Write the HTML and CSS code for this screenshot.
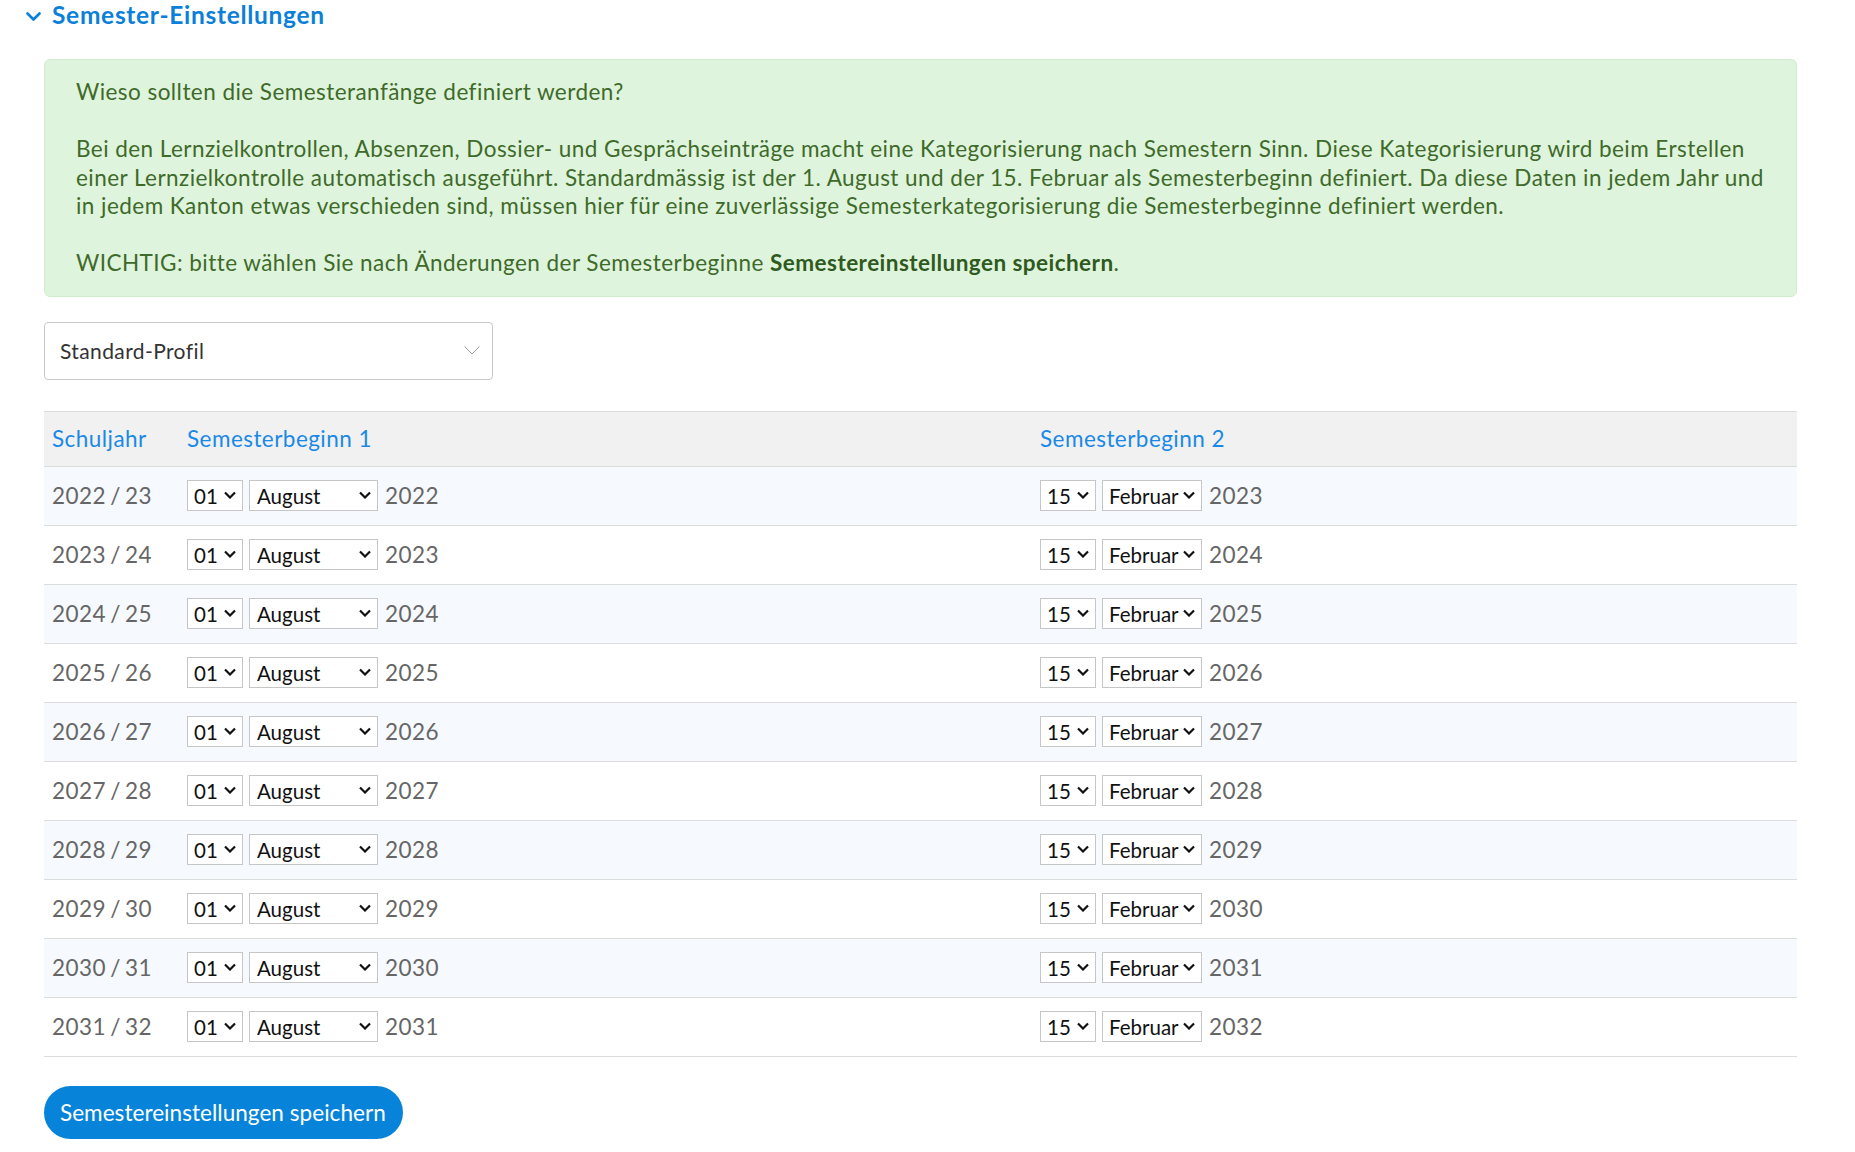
FILE: index.html
```html
<!DOCTYPE html>
<html lang="de">
<head>
<meta charset="utf-8">
<title>Semester-Einstellungen</title>
<link rel="stylesheet" href="styles.css">
</head>
<body>
<div class="page">
  <h2 class="section-title">
    <svg class="title-chev" width="15" height="9" viewBox="0 0 15 9"><path d="M1.5 1.5 L7.5 7.5 L13.5 1.5" fill="none" stroke="#0b80d8" stroke-width="2.6" stroke-linecap="round" stroke-linejoin="round"/></svg>
    <span>Semester-Einstellungen</span>
  </h2>

  <div class="info">
    <p>Wieso sollten die Semesteranfänge definiert werden?</p>
    <p>Bei den Lernzielkontrollen, Absenzen, Dossier- und Gesprächseinträge macht eine Kategorisierung nach Semestern Sinn. Diese Kategorisierung wird beim Erstellen<br>einer Lernzielkontrolle automatisch ausgeführt. Standardmässig ist der 1. August und der 15. Februar als Semesterbeginn definiert. Da diese Daten in jedem Jahr und<br>in jedem Kanton etwas verschieden sind, müssen hier für eine zuverlässige Semesterkategorisierung die Semesterbeginne definiert werden.</p>
    <p>WICHTIG: bitte wählen Sie nach Änderungen der Semesterbeginne <strong>Semestereinstellungen speichern</strong>.</p>
  </div>

  <div class="profile">
    <select class="profile-select">
      <option>Standard-Profil</option>
    </select>
    <svg class="profile-chev" width="16" height="9" viewBox="0 0 16 9"><path d="M0.5 0.5 L8 8 L15.5 0.5" fill="none" stroke="#a0a0a0" stroke-width="1"/></svg>
  </div>

  <table class="sem-table">
    <colgroup><col class="c-year"><col class="c-s1"><col class="c-s2"></colgroup>
    <thead>
      <tr><th>Schuljahr</th><th>Semesterbeginn 1</th><th>Semesterbeginn 2</th></tr>
    </thead>
    <tbody id="rows"></tbody>
  </table>

  <button class="save-btn" type="button">Semestereinstellungen speichern</button>
</div>
<script src="app.js"></script>
</body>
</html>
```
FILE: styles.css
```css
* { box-sizing: border-box; }
html, body { margin: 0; padding: 0; background: #fff; }
body {
  font-family: "Lato", "Roboto", "Open Sans", sans-serif;
  font-size: 22.5px;
  letter-spacing: 0.45px;
  color: #333;
}
.page {
  width: 1753px;
  margin-left: 44px;
  padding-top: 0;
}
.section-title {
  display: flex;
  align-items: center;
  gap: 11px;
  margin: -1px 0 0 -18px;
  height: 32px;
  font-size: 24.5px;
  line-height: 32px;
  letter-spacing: 0.7px;
  font-weight: 700;
  color: #0b80d8;
}
.title-chev { display: block; margin-top: 2px; }

.info {
  margin-top: 28px;
  background: #dff4dc;
  border: 1px solid #d3ecd0;
  border-radius: 6px;
  padding: 18px 31px 18px 31px;
  color: #3e6a2a;
  line-height: 28.5px;
}
.info p { margin: 0; }
.info p + p { margin-top: 28.5px; }
.info strong { font-weight: 700; color: #2f5a1e; }

.profile {
  position: relative;
  width: 449px;
  margin-top: 25px;
}
.profile-select {
  display: block;
  width: 449px;
  height: 58px;
  appearance: none;
  -webkit-appearance: none;
  background: #fff;
  border: 1px solid #c9c9c9;
  border-radius: 4px;
  padding: 0 40px 0 15px;
  font-family: inherit;
  font-size: 21px;
  letter-spacing: 0.4px;
  color: #333;
}
.profile-chev {
  position: absolute;
  right: 13px;
  top: 24px;
  pointer-events: none;
}

.sem-table {
  margin-top: 31px;
  width: 1753px;
  border-collapse: collapse;
  table-layout: fixed;
}
.c-year { width: 135px; }
.c-s1 { width: 853px; }
.sem-table thead tr {
  background: #f1f1f1;
  border-top: 1px solid #dcdcdc;
  height: 55px;
}
.sem-table th {
  text-align: left;
  font-weight: 400;
  color: #1a89e6;
  padding: 0 8px;
  vertical-align: middle;
}
.sem-table tbody tr {
  border-top: 1px solid #dcdcdc;
  height: 59px;
}
.sem-table tbody tr:last-child { border-bottom: 1px solid #dcdcdc; }
.sem-table tbody tr:nth-child(odd) { background: #f6f9fd; }
.sem-table td {
  padding: 0 8px;
  color: #666;
  vertical-align: middle;
}
.sy { word-spacing: -2px; }
.date {
  display: flex;
  align-items: center;
  gap: 6px;
}
.year { margin-left: 1px; }
.sel {
  position: relative;
  display: block;
}
.sel select {
  display: block;
  height: 31px;
  appearance: none;
  -webkit-appearance: none;
  background: #fff;
  border: 1px solid #c6c6c6;
  border-radius: 0;
  padding: 0 0 0 6px;
  font-family: inherit;
  font-size: 20.5px;
  letter-spacing: 0;
  color: #111;
}
.sel-day select { width: 56px; }
.sel-aug select { width: 129px; padding-left: 7px; }
.sel-feb select { width: 100px; padding-left: 6px; }
.sel-chev {
  position: absolute;
  right: 7px;
  top: 11px;
  pointer-events: none;
}

.save-btn {
  display: block;
  margin-top: 29px;
  height: 53px;
  padding: 0 17px 0 16px;
  border: none;
  border-radius: 27px;
  background: #0784d9;
  color: #fff;
  font-family: inherit;
  font-size: 22.5px;
  letter-spacing: 0.05px;
  cursor: pointer;
}
```
FILE: app.js
```js
(function () {
  var tbody = document.getElementById('rows');
  var chev = '<svg class="sel-chev" width="12" height="8" viewBox="0 0 12 8"><path d="M1 1.5 L6 6.5 L11 1.5" fill="none" stroke="#111" stroke-width="2.2"/></svg>';
  function days(sel) {
    var out = '';
    for (var d = 1; d <= 31; d++) {
      var v = (d < 10 ? '0' : '') + d;
      out += '<option' + (v === sel ? ' selected' : '') + '>' + v + '</option>';
    }
    return out;
  }
  function months(list, sel) {
    return list.map(function (m) {
      return '<option' + (m === sel ? ' selected' : '') + '>' + m + '</option>';
    }).join('');
  }
  var m1 = ['Juli', 'August', 'September'];
  var m2 = ['Januar', 'Februar', 'März'];
  var html = '';
  for (var y = 2022; y <= 2031; y++) {
    var next = String(y + 1).slice(2);
    html += '<tr>' +
      '<td class="sy">' + y + ' / ' + next + '</td>' +
      '<td><div class="date">' +
        '<span class="sel sel-day"><select>' + days('01') + '</select>' + chev + '</span>' +
        '<span class="sel sel-aug"><select>' + months(m1, 'August') + '</select>' + chev + '</span>' +
        '<span class="year">' + y + '</span>' +
      '</div></td>' +
      '<td><div class="date">' +
        '<span class="sel sel-day"><select>' + days('15') + '</select>' + chev + '</span>' +
        '<span class="sel sel-feb"><select>' + months(m2, 'Februar') + '</select>' + chev + '</span>' +
        '<span class="year">' + (y + 1) + '</span>' +
      '</div></td>' +
      '</tr>';
  }
  tbody.innerHTML = html;
})();
```
